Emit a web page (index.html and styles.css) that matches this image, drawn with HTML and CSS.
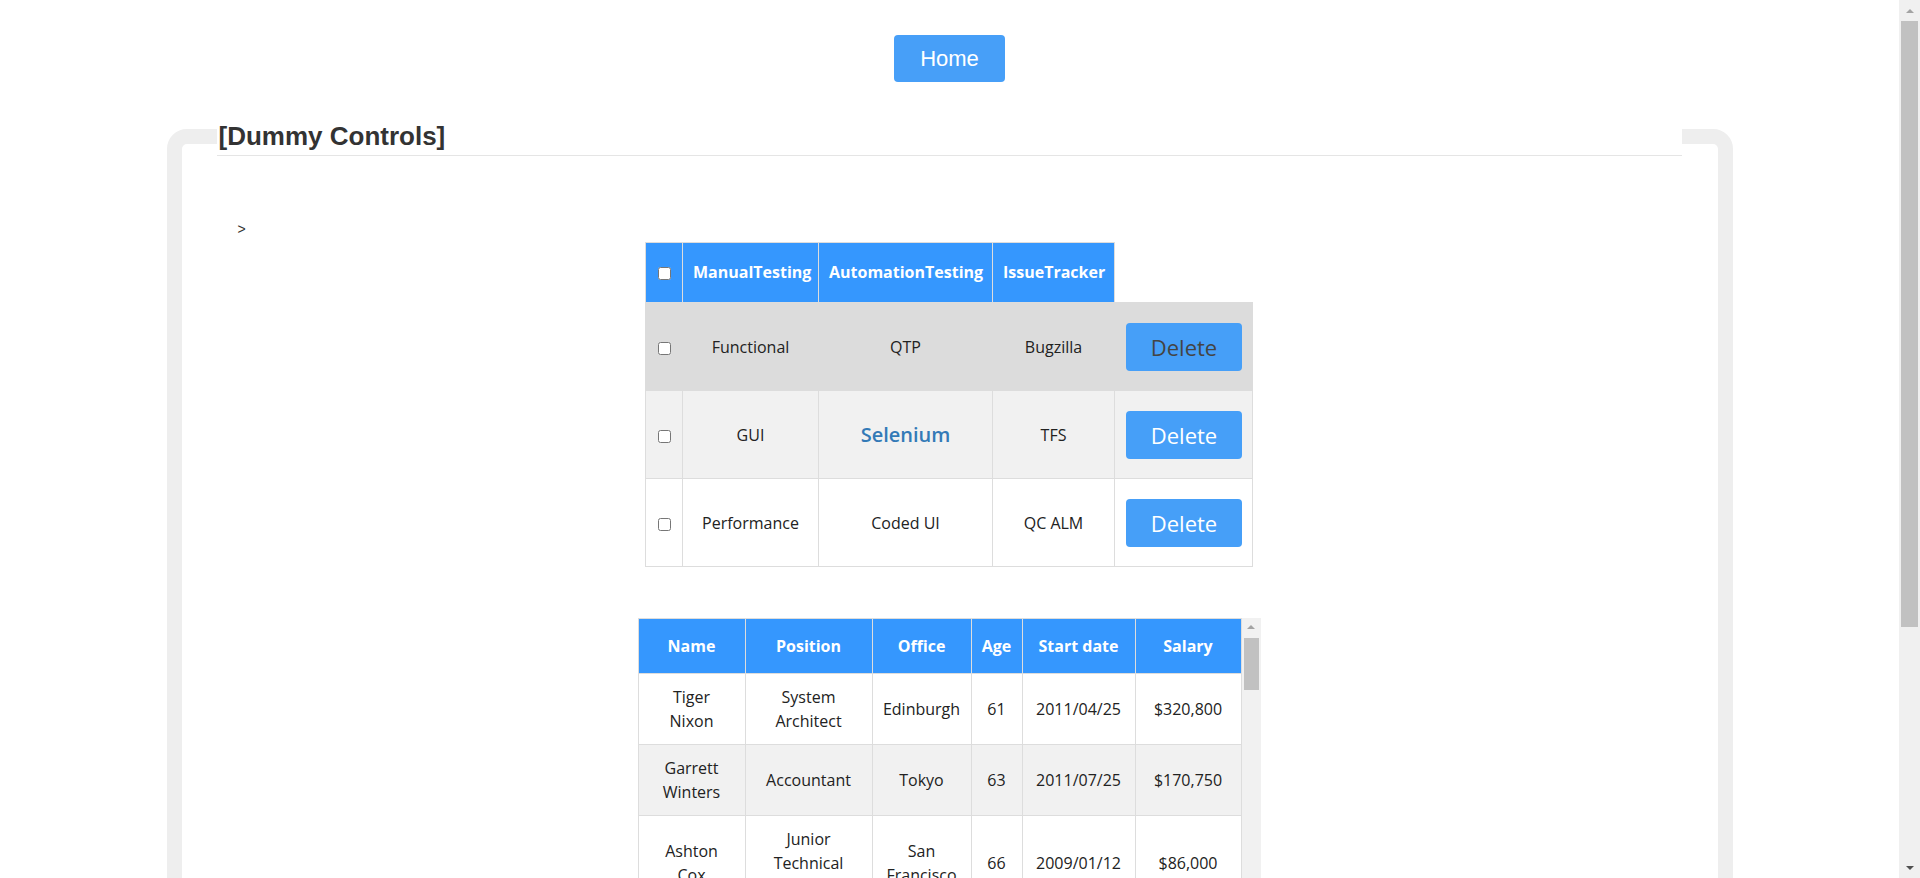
FILE: index.html
```html
<!DOCTYPE html>
<html>
<head>
<meta charset="utf-8">
<title>Dummy Controls</title>
<link rel="stylesheet" href="styles.css">
</head>
<body>
<div class="page">
  <div class="topbar"><a class="home-btn" href="#">Home</a></div>
  <fieldset class="box">
    <legend>[Dummy Controls]</legend>
    <div class="note">&gt;</div>
    <table class="grid grid-skills">
      <colgroup><col class="c-chk"><col class="c-man"><col class="c-auto"><col class="c-issue"><col class="c-del"></colgroup>
      <thead>
        <tr><th><input type="checkbox"></th><th>ManualTesting</th><th>AutomationTesting</th><th>IssueTracker</th></tr>
      </thead>
      <tbody>
        <tr class="row-hover"><td><input type="checkbox"></td><td>Functional</td><td>QTP</td><td>Bugzilla</td><td><button class="del-btn">Delete</button></td></tr>
        <tr class="row-alt"><td><input type="checkbox"></td><td>GUI</td><td><a class="link" href="#">Selenium</a></td><td>TFS</td><td><button class="del-btn">Delete</button></td></tr>
        <tr><td><input type="checkbox"></td><td>Performance</td><td>Coded UI</td><td>QC ALM</td><td><button class="del-btn">Delete</button></td></tr>
      </tbody>
    </table>
    <div class="scroll-wrap">
      <table class="grid grid-emp">
        <colgroup><col class="e-name"><col class="e-pos"><col class="e-off"><col class="e-age"><col class="e-date"><col class="e-sal"></colgroup>
        <thead>
          <tr><th>Name</th><th>Position</th><th>Office</th><th>Age</th><th>Start date</th><th>Salary</th></tr>
        </thead>
        <tbody>
          <tr><td class="pad-name">Tiger Nixon</td><td>System Architect</td><td class="pad-off">Edinburgh</td><td>61</td><td>2011/04/25</td><td>$320,800</td></tr>
          <tr class="row-alt"><td class="pad-name">Garrett Winters</td><td>Accountant</td><td class="pad-off">Tokyo</td><td>63</td><td>2011/07/25</td><td>$170,750</td></tr>
          <tr><td class="pad-name">Ashton Cox</td><td>Junior Technical Author</td><td class="pad-off">San Francisco</td><td>66</td><td>2009/01/12</td><td>$86,000</td></tr>
          <tr class="row-alt"><td class="pad-name">Cedric Kelly</td><td>Senior Javascript Developer</td><td class="pad-off">Edinburgh</td><td>22</td><td>2012/03/29</td><td>$433,060</td></tr>
          <tr><td class="pad-name">Airi Satou</td><td>Accountant</td><td class="pad-off">Tokyo</td><td>33</td><td>2008/11/28</td><td>$162,700</td></tr>
        </tbody>
      </table>
      <div class="mini-scroll">
        <div class="ms-up"><span class="tri-up light"></span></div>
        <div class="ms-thumb"></div>
      </div>
    </div>
  </fieldset>
</div>
<div class="vscroll">
  <div class="vs-btn"><span class="tri-up light"></span></div>
  <div class="vs-thumb"></div>
  <div class="vs-fill"></div>
  <div class="vs-btn"><span class="tri-down"></span></div>
</div>
</body>
</html>
```
FILE: styles.css
```css
html, body {
  margin: 0;
  padding: 0;
  height: 878px;
  overflow: hidden;
  background: #fff;
}
body {
  display: flex;
  font-family: "Liberation Sans", Arial, sans-serif;
  font-size: 14px;
  line-height: 20px;
  color: #333;
}
.page {
  flex: 1;
  min-width: 0;
  padding-top: 35px;
}
.topbar {
  display: flex;
  justify-content: center;
}
.home-btn {
  display: flex;
  align-items: center;
  justify-content: center;
  width: 111px;
  height: 47px;
  background: #479ff8;
  color: #fff;
  font-size: 22px;
  text-decoration: none;
  border-radius: 4px;
}
.box {
  box-sizing: border-box;
  width: 1566px;
  min-width: 0;
  margin: 35px auto 0;
  padding: 0 36px 0 35px;
  border: 15px solid #eeeeee;
  border-radius: 20px;
}
.box legend {
  display: block;
  width: 100%;
  box-sizing: border-box;
  padding: 0 0 0 2px;
  margin: 0;
  font-size: 26px;
  font-weight: bold;
  line-height: 38px;
  color: #333;
  border: 0;
  border-bottom: 1px solid #e5e5e5;
}
.note {
  margin-top: 63px;
  padding-left: 21px;
  line-height: 20px;
  font-size: 14px;
  color: #333;
}
.grid {
  border-collapse: collapse;
  table-layout: fixed;
  font-family: "Open Sans", "Noto Sans", sans-serif;
  font-size: 16px;
  color: #222;
  margin-left: auto;
  margin-right: auto;
}
.grid th, .grid td {
  border: 1px solid #dddddd;
  text-align: center;
  vertical-align: middle;
}
.grid th {
  background: #3597fe;
  color: #fff;
  font-weight: bold;
  white-space: nowrap;
  line-height: 24px;
}
.grid input[type=checkbox] {
  margin: 0;
  width: 13px;
  height: 13px;
  vertical-align: middle;
}
.grid-skills {
  width: 607px;
  margin-top: 3px;
}
.c-chk { width: 37px; }
.c-man { width: 136px; }
.c-auto { width: 174px; }
.c-issue { width: 122px; }
.c-del { width: 138px; }
.grid-skills th {
  padding: 17px 10px 18px;
}
.grid-skills td {
  padding: 20px 10px 19px;
  line-height: 24px;
}
.grid-skills td:last-child {
  padding: 20px 11px 19px;
}
.row-hover td {
  background: #dcdcdc;
  border-color: #dcdcdc;
}
.row-alt td {
  background: #f1f1f1;
}
.link {
  color: #337ab7;
  font-size: 20px;
  font-weight: 600;
  text-decoration: none;
}
.del-btn {
  display: block;
  width: 116px;
  height: 48px;
  border: 0;
  border-radius: 4px;
  background: #469ff8;
  color: #fff;
  font-family: "Open Sans", "Noto Sans", sans-serif;
  font-size: 22px;
  padding: 0;
}
.row-hover .del-btn {
  color: #444;
}
.scroll-wrap {
  display: flex;
  justify-content: center;
  margin-top: 51px;
}
.grid-emp {
  width: 603px;
  margin: 0;
}
.e-name { width: 107px; }
.e-pos { width: 127px; }
.e-off { width: 99px; }
.e-age { width: 51px; }
.e-date { width: 113px; }
.e-sal { width: 106px; }
.grid-emp th {
  padding: 15px 8px 15px;
}
.grid-emp td {
  padding: 11px 10px 11px;
  line-height: 24px;
}
.grid-emp td.pad-name {
  padding-left: 20px;
  padding-right: 20px;
}
.grid-emp td.pad-off {
  padding-left: 8px;
  padding-right: 8px;
}
.mini-scroll {
  width: 19px;
  background: #f1f1f1;
  display: flex;
  flex-direction: column;
  align-items: center;
}
.ms-up {
  height: 17px;
  width: 100%;
  display: flex;
  align-items: center;
  justify-content: center;
}
.ms-thumb {
  margin-top: 3px;
  width: 15px;
  height: 52px;
  background: #c1c1c1;
}
.vscroll {
  width: 21px;
  flex: none;
  background: #f0f0f0;
  display: flex;
  flex-direction: column;
  align-items: center;
}
.vs-btn {
  height: 21px;
  width: 100%;
  display: flex;
  align-items: center;
  justify-content: center;
}
.vs-thumb {
  width: 17px;
  height: 606px;
  background: #c1c1c1;
}
.vs-fill {
  flex: 1;
}
.tri-up {
  width: 0;
  height: 0;
  border-left: 4px solid transparent;
  border-right: 4px solid transparent;
  border-bottom: 4px solid #505050;
}
.tri-up.light {
  border-bottom-color: #a3a3a3;
}
.tri-down {
  width: 0;
  height: 0;
  border-left: 4px solid transparent;
  border-right: 4px solid transparent;
  border-top: 4px solid #505050;
}
```
